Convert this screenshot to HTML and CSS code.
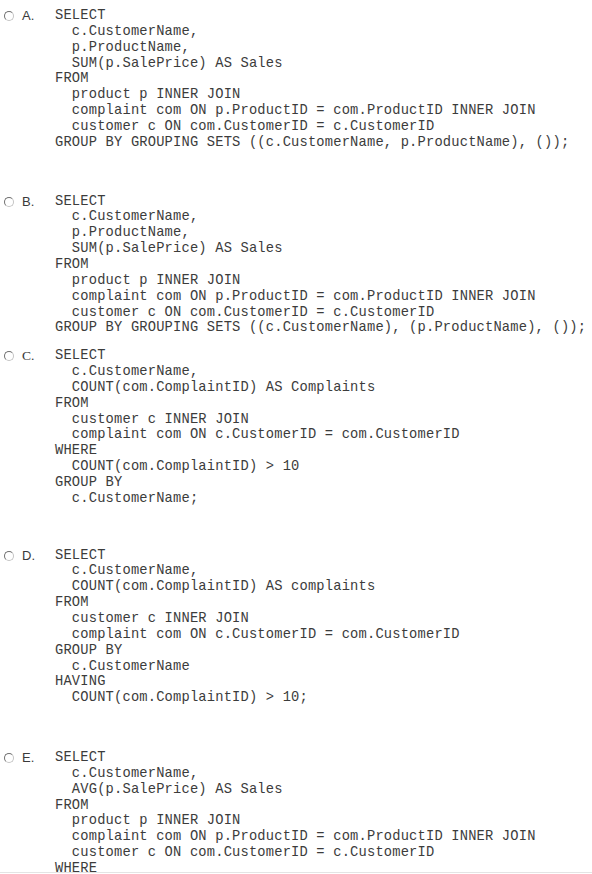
FILE: index.html
```html
<!DOCTYPE html>
<html>
<head>
<meta charset="utf-8">
<link rel="stylesheet" href="styles.css">
</head>
<body>
<div class="page">
  <div class="option opt-a">
    <div class="choice"><span class="radio"></span><span class="label">A.</span></div>
    <pre class="code">SELECT
  c.CustomerName,
  p.ProductName,
  SUM(p.SalePrice) AS Sales
FROM
  product p INNER JOIN
  complaint com ON p.ProductID = com.ProductID INNER JOIN
  customer c ON com.CustomerID = c.CustomerID
GROUP BY GROUPING SETS ((c.CustomerName, p.ProductName), ());</pre>
  </div>
  <div class="option opt-b">
    <div class="choice"><span class="radio"></span><span class="label">B.</span></div>
    <pre class="code">SELECT
  c.CustomerName,
  p.ProductName,
  SUM(p.SalePrice) AS Sales
FROM
  product p INNER JOIN
  complaint com ON p.ProductID = com.ProductID INNER JOIN
  customer c ON com.CustomerID = c.CustomerID
GROUP BY GROUPING SETS ((c.CustomerName), (p.ProductName), ());</pre>
  </div>
  <div class="option opt-c">
    <div class="choice"><span class="radio"></span><span class="label serif">C.</span></div>
    <pre class="code">SELECT
  c.CustomerName,
  COUNT(com.ComplaintID) AS Complaints
FROM
  customer c INNER JOIN
  complaint com ON c.CustomerID = com.CustomerID
WHERE
  COUNT(com.ComplaintID) &gt; 10
GROUP BY
  c.CustomerName;</pre>
  </div>
  <div class="option opt-d">
    <div class="choice"><span class="radio"></span><span class="label">D.</span></div>
    <pre class="code">SELECT
  c.CustomerName,
  COUNT(com.ComplaintID) AS complaints
FROM
  customer c INNER JOIN
  complaint com ON c.CustomerID = com.CustomerID
GROUP BY
  c.CustomerName
HAVING
  COUNT(com.ComplaintID) &gt; 10;</pre>
  </div>
  <div class="option opt-e">
    <div class="choice"><span class="radio"></span><span class="label">E.</span></div>
    <pre class="code">SELECT
  c.CustomerName,
  AVG(p.SalePrice) AS Sales
FROM
  product p INNER JOIN
  complaint com ON p.ProductID = com.ProductID INNER JOIN
  customer c ON com.CustomerID = c.CustomerID
WHERE</pre>
  </div>
  <div class="rule"></div>
</div>
</body>
</html>
```

FILE: styles.css
```css
html, body {
  margin: 0;
  padding: 0;
  background: #ffffff;
}

.page {
  width: 592px;
  height: 874px;
  overflow: hidden;
  position: relative;
}

.option {
  display: flex;
  align-items: flex-start;
}

.opt-a { padding-top: 8px; }
.opt-b { margin-top: 43px; }
.opt-c { margin-top: 12px; }
.opt-d { margin-top: 41px; }
.opt-e { margin-top: 44px; }

.choice {
  width: 55px;
  flex: none;
  display: flex;
  align-items: center;
  height: 16px;
  padding-left: 4px;
  box-sizing: border-box;
}

.radio {
  width: 10px;
  height: 10px;
  border-radius: 50%;
  box-sizing: border-box;
  border: 1.5px solid #c4c4c4;
  border-top-color: #6e6e6e;
  border-left-color: #6e6e6e;
  margin-right: 8px;
  flex: none;
}

.label {
  font-family: "Liberation Sans", Arial, sans-serif;
  font-size: 13px;
  color: #3a3a3a;
  line-height: 16px;
}

.label.serif {
  font-family: "Liberation Serif", "Times New Roman", serif;
  font-size: 13.5px;
}

.code {
  margin: 0;
  font-family: "Liberation Mono", "Courier New", monospace;
  font-size: 13.75px;
  letter-spacing: 0.18px;
  line-height: 15.85px;
  color: #3c3c3c;
  white-space: pre;
}

.rule {
  position: absolute;
  left: 0;
  right: 0;
  bottom: 1px;
  height: 1px;
  background: #e4e4e4;
}
```
